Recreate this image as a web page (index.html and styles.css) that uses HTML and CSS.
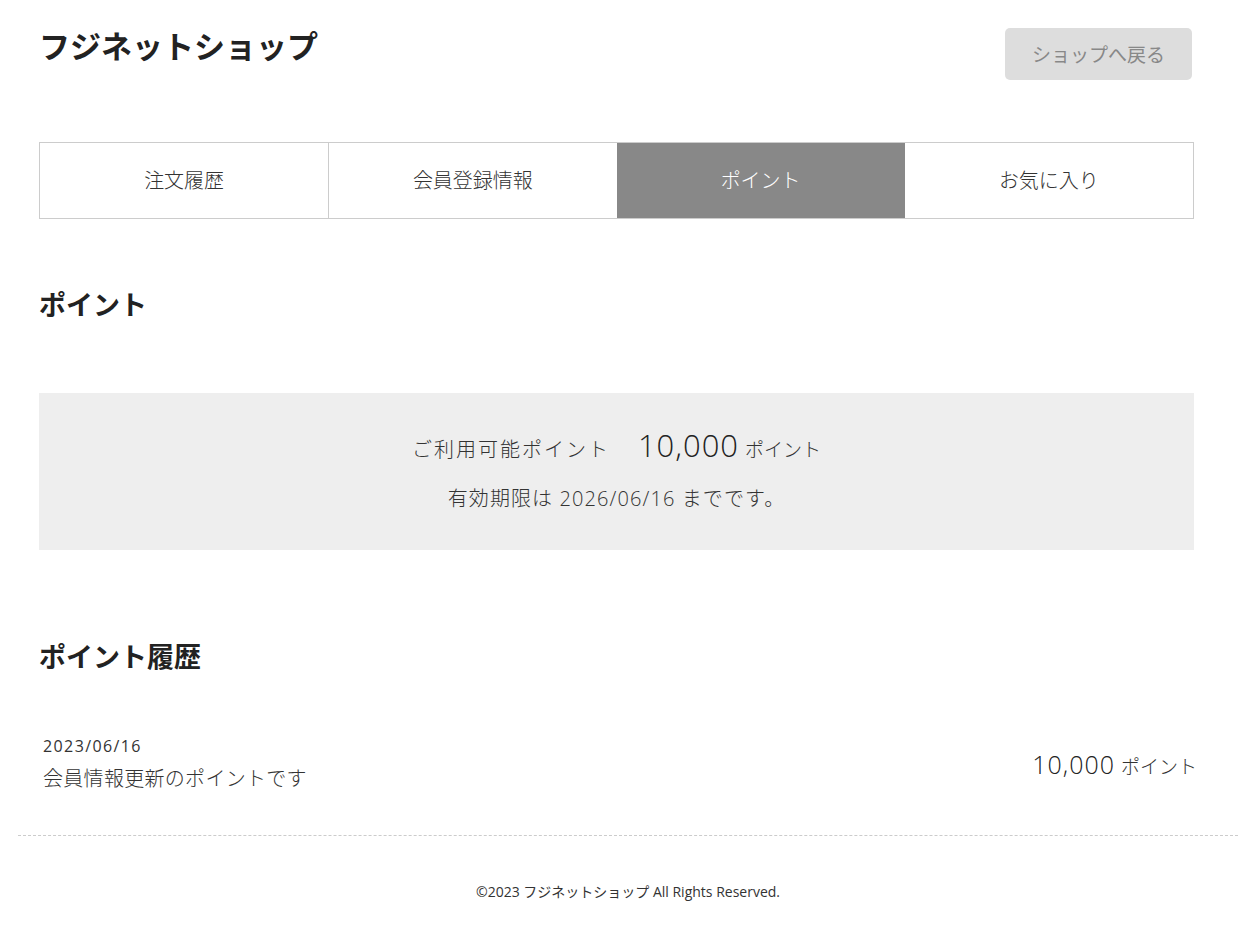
FILE: index.html
```html
<!DOCTYPE html>
<html lang="ja">
<head>
<meta charset="utf-8">
<title>フジネットショップ ポイント</title>
<link rel="stylesheet" href="styles.css">
</head>
<body>
<div class="page">
  <header class="header">
    <h1 class="logo">フジネットショップ</h1>
    <a class="back-btn" href="#">ショップへ戻る</a>
  </header>
  <nav class="tabs">
    <a class="tab" href="#">注文履歴</a>
    <a class="tab" href="#">会員登録情報</a>
    <a class="tab active" href="#">ポイント</a>
    <a class="tab" href="#">お気に入り</a>
  </nav>
  <h2 class="section-title first">ポイント</h2>
  <div class="point-box">
    <div class="point-line"><span class="label">ご利用可能ポイント</span><span class="num">10,000</span><span class="unit">ポイント</span></div>
    <div class="expire">有効期限は 2026/06/16 までです。</div>
  </div>
  <h2 class="section-title second">ポイント履歴</h2>
  <div class="history-row">
    <div class="history-info">
      <div class="date">2023/06/16</div>
      <div class="desc">会員情報更新のポイントです</div>
    </div>
    <div class="history-pt"><span class="num2">10,000</span><span class="unit2">ポイント</span></div>
  </div>
</div>
<footer class="footer">©2023 フジネットショップ All Rights Reserved.</footer>
</body>
</html>
```
FILE: styles.css
```css
html, body {
  margin: 0;
  padding: 0;
  background: #fff;
}
body {
  font-family: "Open Sans", "Noto Sans CJK JP", "Noto Sans", sans-serif;
  color: #333;
  font-weight: 300;
}
.page {
  padding: 0 56px 0 39px;
}
.header {
  display: flex;
  justify-content: space-between;
  align-items: flex-start;
  padding-top: 28px;
}
.logo {
  margin: 0;
  font-family: "Noto Sans CJK JP", sans-serif;
  font-size: 31px;
  line-height: 34px;
  font-weight: 700;
  color: #222;
}
.back-btn {
  display: flex;
  align-items: center;
  justify-content: center;
  width: 187px;
  height: 52px;
  margin-right: 2px;
  background: #ddd;
  border-radius: 5px;
  color: #888;
  font-size: 19px;
  text-decoration: none;
  font-weight: 400;
}
.tabs {
  display: grid;
  grid-template-columns: repeat(4, 1fr);
  margin-top: 62px;
  border: 1px solid #ccc;
  height: 75px;
}
.tab {
  display: flex;
  align-items: center;
  justify-content: center;
  color: #333;
  text-decoration: none;
  font-size: 20px;
  padding-bottom: 3px;
  border-left: 1px solid #ccc;
}
.tab:first-child {
  border-left: none;
}
.tab.active {
  background: #888;
  color: #fff;
  border-left: none;
}
.tab.active + .tab {
  border-left: none;
}
.section-title {
  margin: 0;
  font-family: "Noto Sans CJK JP", sans-serif;
  font-size: 27px;
  line-height: 40px;
  font-weight: 700;
  color: #222;
}
.section-title.first {
  margin-top: 65px;
}
.section-title.second {
  margin-top: 86px;
}
.point-box {
  margin-top: 69px;
  background: #eee;
  padding: 32px 0 36px;
  text-align: center;
}
.point-line {
  display: flex;
  justify-content: center;
  align-items: baseline;
  line-height: 40px;
}
.label {
  font-size: 20px;
  letter-spacing: 2px;
  margin-right: 28px;
}
.num {
  font-size: 31px;
  color: #222;
  margin-right: 6px;
  letter-spacing: 1px;
}
.unit {
  font-size: 19px;
}
.expire {
  margin-top: 14px;
  font-size: 20px;
  line-height: 30px;
  letter-spacing: 1.1px;
}
.history-row {
  display: flex;
  justify-content: space-between;
  align-items: center;
  margin-top: 58px;
  padding: 0 0 0 4px;
  margin-right: -3px;
}
.date {
  font-size: 16px;
  line-height: 24px;
  letter-spacing: 1.4px;
  font-weight: 400;
}
.desc {
  margin-top: 6px;
  font-size: 20px;
  line-height: 30px;
  letter-spacing: 0.3px;
}
.history-pt {
  display: flex;
  align-items: baseline;
}
.num2 {
  font-size: 25px;
  color: #222;
  margin-right: 6px;
  letter-spacing: 1px;
}
.unit2 {
  font-size: 19px;
}
.footer {
  margin: 41px 12px 0 18px;
  border-top: 1px dashed #ccc;
  padding-top: 46px;
  padding-bottom: 38px;
  text-align: center;
  font-size: 14px;
  line-height: 20px;
  font-weight: 400;
}
```
